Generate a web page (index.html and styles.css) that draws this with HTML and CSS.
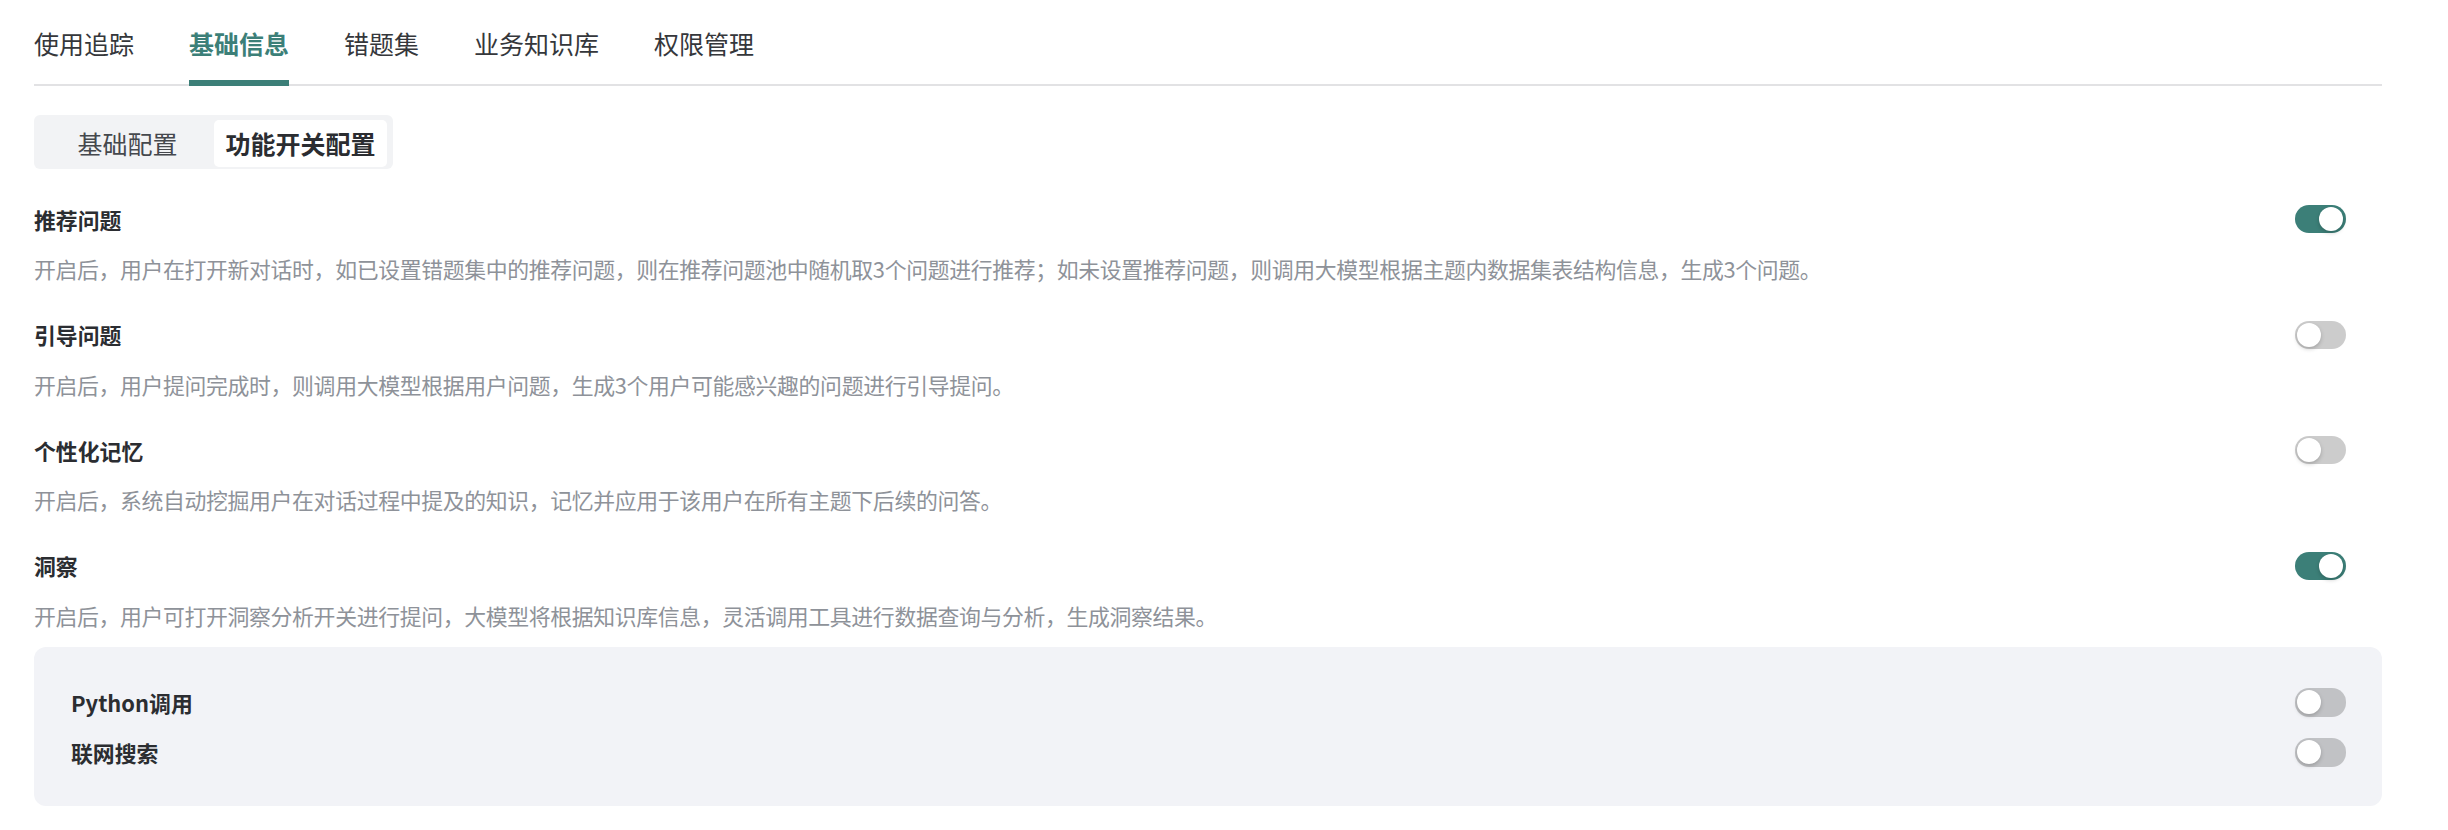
FILE: index.html
```html
<!DOCTYPE html>
<html lang="zh-CN">
<head>
<meta charset="utf-8">
<title>基础信息 - 功能开关配置</title>
<link rel="stylesheet" href="styles.css">
</head>
<body>
<div class="page">
  <nav class="tabs">
    <a class="tab">使用追踪</a>
    <a class="tab active">基础信息</a>
    <a class="tab">错题集</a>
    <a class="tab">业务知识库</a>
    <a class="tab">权限管理</a>
  </nav>

  <div class="segmented">
    <button class="seg">基础配置</button>
    <button class="seg active">功能开关配置</button>
  </div>

  <div class="settings">
    <section class="setting">
      <div class="setting-head">
        <span class="setting-title">推荐问题</span>
        <button class="switch on" role="switch" aria-checked="true"><span class="knob"></span></button>
      </div>
      <p class="setting-desc">开启后，用户在打开新对话时，如已设置错题集中的推荐问题，则在推荐问题池中随机取3个问题进行推荐；如未设置推荐问题，则调用大模型根据主题内数据集表结构信息，生成3个问题。</p>
    </section>

    <section class="setting">
      <div class="setting-head">
        <span class="setting-title">引导问题</span>
        <button class="switch" role="switch" aria-checked="false"><span class="knob"></span></button>
      </div>
      <p class="setting-desc">开启后，用户提问完成时，则调用大模型根据用户问题，生成3个用户可能感兴趣的问题进行引导提问。</p>
    </section>

    <section class="setting">
      <div class="setting-head">
        <span class="setting-title">个性化记忆</span>
        <button class="switch" role="switch" aria-checked="false"><span class="knob"></span></button>
      </div>
      <p class="setting-desc">开启后，系统自动挖掘用户在对话过程中提及的知识，记忆并应用于该用户在所有主题下后续的问答。</p>
    </section>

    <section class="setting">
      <div class="setting-head">
        <span class="setting-title">洞察</span>
        <button class="switch on" role="switch" aria-checked="true"><span class="knob"></span></button>
      </div>
      <p class="setting-desc">开启后，用户可打开洞察分析开关进行提问，大模型将根据知识库信息，灵活调用工具进行数据查询与分析，生成洞察结果。</p>
    </section>

    <div class="subpanel">
      <div class="subpanel-row">
        <span class="subpanel-label">Python调用</span>
        <button class="switch" role="switch" aria-checked="false"><span class="knob"></span></button>
      </div>
      <div class="subpanel-row">
        <span class="subpanel-label">联网搜索</span>
        <button class="switch" role="switch" aria-checked="false"><span class="knob"></span></button>
      </div>
    </div>
  </div>
</div>
</body>
</html>
```

FILE: styles.css
```css
html, body {
  margin: 0;
  padding: 0;
  background: #ffffff;
}

body {
  font-family: "Noto Sans CJK SC", "Noto Sans", sans-serif;
  color: #303133;
}

.page {
  padding: 0 66px 0 34px;
}

/* top tabs */
.tabs {
  display: flex;
  gap: 55px;
  height: 86px;
  box-sizing: border-box;
  border-bottom: 2px solid #e2e2e4;
}

.tab {
  position: relative;
  padding-top: 26px;
  font-size: 25px;
  line-height: 34px;
  color: #35373b;
  cursor: pointer;
}

.tab.active {
  color: #3c7f78;
  font-weight: 700;
}

.tab.active::after {
  content: "";
  position: absolute;
  left: 0;
  right: 0;
  bottom: -2px;
  height: 6px;
  background: #3c7f78;
}

/* segmented control */
.segmented {
  display: inline-flex;
  margin-top: 29px;
  padding: 5px 6px 2px 7px;
  background: #f2f3f5;
  border-radius: 6px;
}

.seg {
  width: 173px;
  height: 47px;
  border: 0;
  margin: 0;
  padding: 0;
  background: transparent;
  border-radius: 5px;
  font-family: inherit;
  font-size: 25px;
  line-height: 47px;
  color: #45484d;
  cursor: pointer;
}

.seg.active {
  background: #ffffff;
  font-weight: 700;
  color: #2b2d31;
}

/* settings */
.settings {
  margin-top: 36px;
}

.setting + .setting {
  margin-top: 35.5px;
}

.setting-head {
  display: flex;
  align-items: center;
  justify-content: space-between;
  height: 28px;
  padding-right: 36px;
}

.setting-title {
  font-size: 21.86px;
  font-weight: 700;
  color: #2b2d31;
}

.setting-desc {
  margin: 19px 0 0;
  font-size: 21.86px;
  line-height: 33px;
  letter-spacing: -0.35px;
  color: #8e9299;
}

/* switch */
.switch {
  display: flex;
  align-items: center;
  justify-content: flex-start;
  box-sizing: border-box;
  width: 51px;
  height: 28px;
  padding: 0 2px;
  margin: 0;
  border: 0;
  border-radius: 14px;
  background: rgba(0, 0, 0, 0.2);
  cursor: pointer;
}

.switch.on {
  justify-content: flex-end;
  background: #3c7f78;
  padding: 0 3px 0 2px;
}

.knob {
  width: 24px;
  height: 24px;
  border-radius: 50%;
  background: #ffffff;
  box-shadow: 0 2px 4px rgba(0, 0, 0, 0.2);
}

/* nested panel */
.subpanel {
  margin-top: 15.5px;
  display: flex;
  flex-direction: column;
  gap: 20px;
  padding: 40px 36px 39px 37px;
  background: #f2f3f7;
  border-radius: 12px;
}

.subpanel-row {
  display: flex;
  align-items: center;
  justify-content: space-between;
  height: 30px;
}

.subpanel-row .switch {
  height: 29px;
}

.subpanel-label {
  font-size: 21.86px;
  font-weight: 700;
  color: #2b2d31;
}
```
